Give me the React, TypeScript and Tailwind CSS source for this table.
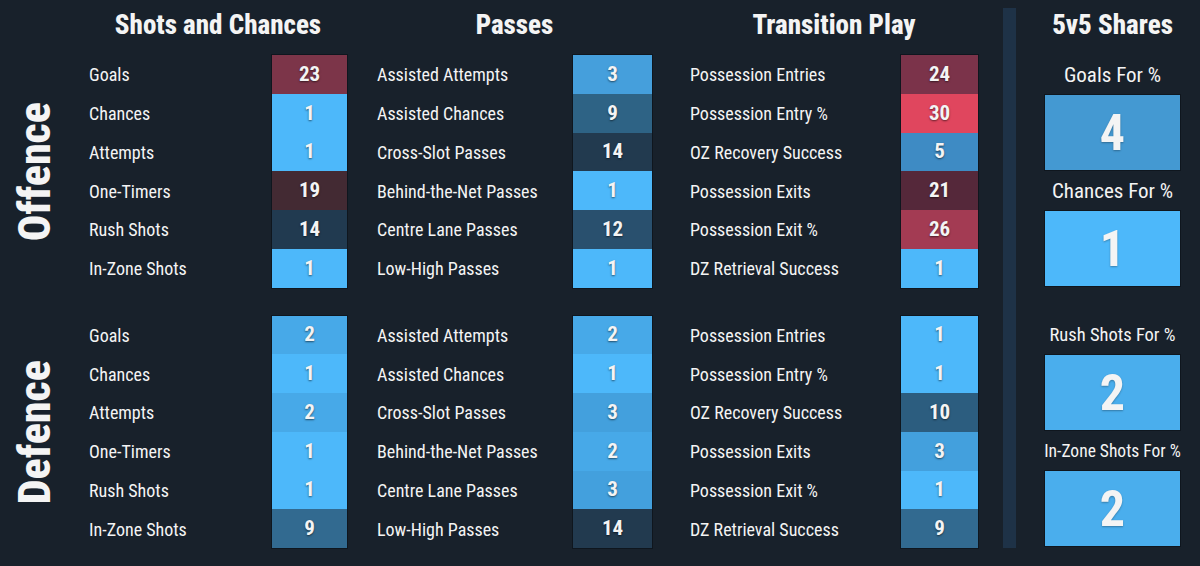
import React from "react";

type Row = [string, string, string];

const shotsO: Row[] = [
  ["Goals", "23", "bg-[#7c3549]"],
  ["Chances", "1", "bg-[#4db8fa]"],
  ["Attempts", "1", "bg-[#4db8fa]"],
  ["One-Timers", "19", "bg-[#432a33]"],
  ["Rush Shots", "14", "bg-[#213a50]"],
  ["In-Zone Shots", "1", "bg-[#4db8fa]"],
];
const shotsD: Row[] = [
  ["Goals", "2", "bg-[#47a9e8]"],
  ["Chances", "1", "bg-[#4db8fa]"],
  ["Attempts", "2", "bg-[#47a9e8]"],
  ["One-Timers", "1", "bg-[#4db8fa]"],
  ["Rush Shots", "1", "bg-[#4db8fa]"],
  ["In-Zone Shots", "9", "bg-[#326a90]"],
];
const passO: Row[] = [
  ["Assisted Attempts", "3", "bg-[#459fdc]"],
  ["Assisted Chances", "9", "bg-[#2e6385]"],
  ["Cross-Slot Passes", "14", "bg-[#223a4f]"],
  ["Behind-the-Net Passes", "1", "bg-[#4db8fa]"],
  ["Centre Lane Passes", "12", "bg-[#29506e]"],
  ["Low-High Passes", "1", "bg-[#4db8fa]"],
];
const passD: Row[] = [
  ["Assisted Attempts", "2", "bg-[#47a9e8]"],
  ["Assisted Chances", "1", "bg-[#4db8fa]"],
  ["Cross-Slot Passes", "3", "bg-[#43a0dd]"],
  ["Behind-the-Net Passes", "2", "bg-[#47a9e8]"],
  ["Centre Lane Passes", "3", "bg-[#43a0dd]"],
  ["Low-High Passes", "14", "bg-[#223a4f]"],
];
const transO: Row[] = [
  ["Possession Entries", "24", "bg-[#7b334a]"],
  ["Possession Entry %", "30", "bg-[#e0465e]"],
  ["OZ Recovery Success", "5", "bg-[#3e8bc4]"],
  ["Possession Exits", "21", "bg-[#55283a]"],
  ["Possession Exit %", "26", "bg-[#a33b53]"],
  ["DZ Retrieval Success", "1", "bg-[#4db8fa]"],
];
const transD: Row[] = [
  ["Possession Entries", "1", "bg-[#4db8fa]"],
  ["Possession Entry %", "1", "bg-[#4db8fa]"],
  ["OZ Recovery Success", "10", "bg-[#2c5d7f]"],
  ["Possession Exits", "3", "bg-[#43a0dd]"],
  ["Possession Exit %", "1", "bg-[#4db8fa]"],
  ["DZ Retrieval Success", "9", "bg-[#326a90]"],
];

function Block({ rows, labelW, boxW }: { rows: Row[]; labelW: string; boxW: string }) {
  return (
    <div className="flex">
      <div className={`flex flex-col ${labelW}`}>
        {rows.map((r, i) => (
          <div key={i} className="h-[38.75px] flex items-center pt-[2px] text-[18px] leading-none whitespace-nowrap">
            {r[0]}
          </div>
        ))}
      </div>
      <div className={`flex flex-col ${boxW} outline outline-1 outline-[#0f161e]`}>
        {rows.map((r, i) => (
          <div
            key={i}
            className={`h-[38.75px] flex items-center justify-center text-[21px] font-bold leading-none [text-shadow:0_1px_2px_rgba(0,0,0,0.55)] ${r[2]}`}
          >
            {r[1]}
          </div>
        ))}
      </div>
    </div>
  );
}

function Group({
  title,
  o,
  d,
  labelW,
  boxW,
  ml,
}: {
  title: string;
  o: Row[];
  d: Row[];
  labelW: string;
  boxW: string;
  ml: string;
}) {
  return (
    <div className={`flex flex-col ${ml}`}>
      <div className="h-[55px] flex items-center justify-center pb-[4px] text-[27px] font-extrabold whitespace-nowrap">
        {title}
      </div>
      <Block rows={o} labelW={labelW} boxW={boxW} />
      <div className="h-[28px]" />
      <Block rows={d} labelW={labelW} boxW={boxW} />
    </div>
  );
}

function ShareBox({ label, value, bg, size }: { label: string; value: string; bg: string; size: string }) {
  return (
    <>
      <div className={`h-[39px] flex items-center justify-center pt-[2px] leading-none whitespace-nowrap ${size}`}>
        {label}
      </div>
      <div
        className={`h-[77px] flex items-center justify-center text-[50px] font-bold leading-none border border-[#0f161e] [text-shadow:0_1px_2px_rgba(0,0,0,0.3)] ${bg}`}
      >
        {value}
      </div>
    </>
  );
}

export default function App() {
  return (
    <div className="w-[1200px] h-[566px] overflow-hidden bg-[#18212b] text-[#f4f4f4] flex font-['Liberation_Sans_Narrow','Roboto_Condensed','Roboto',sans-serif]">
      <div className="w-[70px] flex flex-col pt-[55px]">
        <div className="h-[233px] flex items-center justify-center">
          <span className="[writing-mode:vertical-rl] rotate-180 text-[44px] font-extrabold leading-none">Offence</span>
        </div>
        <div className="h-[28px]" />
        <div className="h-[232px] flex items-center justify-center">
          <span className="[writing-mode:vertical-rl] rotate-180 text-[44px] font-extrabold leading-none">Defence</span>
        </div>
      </div>
      <Group title="Shots and Chances" o={shotsO} d={shotsD} labelW="w-[183px]" boxW="w-[75px]" ml="ml-[19px]" />
      <Group title="Passes" o={passO} d={passD} labelW="w-[196px]" boxW="w-[79px]" ml="ml-[30px]" />
      <Group title="Transition Play" o={transO} d={transD} labelW="w-[211px]" boxW="w-[77px]" ml="ml-[38px]" />
      <div className="ml-[25px] mt-[8px] w-[13px] h-[540px] bg-[#1e3247]" />
      <div className="ml-[28px] w-[137px] flex flex-col">
        <div className="h-[55px] flex items-center justify-center pb-[4px] text-[27px] font-extrabold whitespace-nowrap">
          5v5 Shares
        </div>
        <ShareBox label="Goals For %" value="4" bg="bg-[#4499d2]" size="text-[21px]" />
        <ShareBox label="Chances For %" value="1" bg="bg-[#4db8fa]" size="text-[21px]" />
        <div className="h-[28px]" />
        <ShareBox label="Rush Shots For %" value="2" bg="bg-[#4aaeed]" size="text-[18.5px]" />
        <ShareBox label="In-Zone Shots For %" value="2" bg="bg-[#4aaeed]" size="text-[17.5px]" />
      </div>
    </div>
  );
}
